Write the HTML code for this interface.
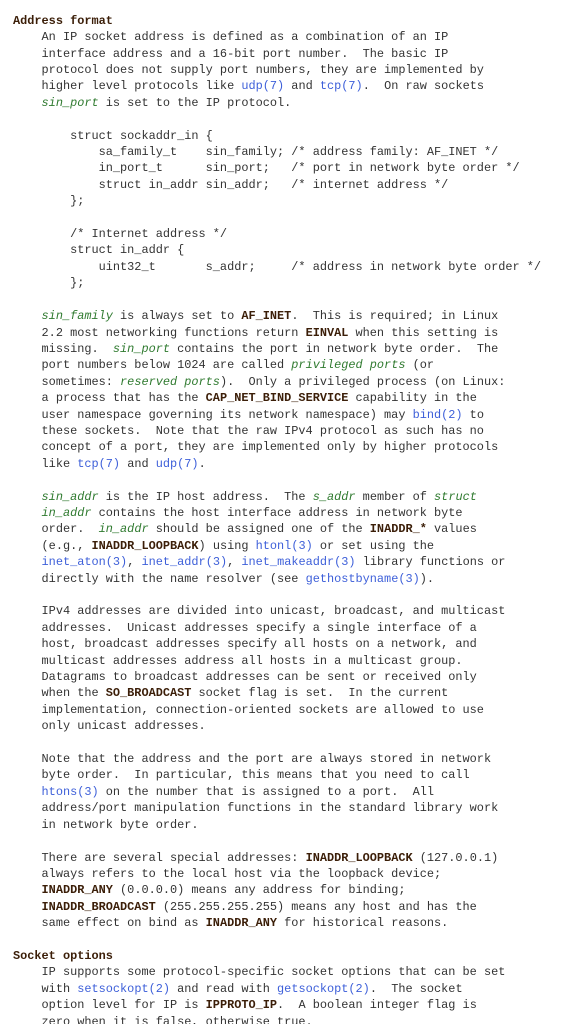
<!DOCTYPE html>
<html><head><meta charset="utf-8"><style>
html,body{margin:0;padding:0;background:#fff;width:572px;height:1024px;overflow:hidden}
pre{margin:0;padding:12.8px 0 0 13px;font-family:"Liberation Mono","Noto Sans CJK SC",monospace;font-size:11.9px;line-height:16.4px;color:#333}
.h{color:#3b1e08;font-weight:bold}
b{color:#3b1e08}
i{color:#2f7a2f}
a{color:#3d5fd9;text-decoration:none}
</style></head><body><pre><span class="h">Address format</span>
    An IP socket address is defined as a combination of an IP
    interface address and a 16-bit port number.  The basic IP
    protocol does not supply port numbers, they are implemented by
    higher level protocols like <a>udp(7)</a> and <a>tcp(7)</a>.  On raw sockets
    <i>sin_port</i> is set to the IP protocol.

        struct sockaddr_in {
            sa_family_t    sin_family; /* address family: AF_INET */
            in_port_t      sin_port;   /* port in network byte order */
            struct in_addr sin_addr;   /* internet address */
        };

        /* Internet address */
        struct in_addr {
            uint32_t       s_addr;     /* address in network byte order */
        };

    <i>sin_family</i> is always set to <b>AF_INET</b>.  This is required; in Linux
    2.2 most networking functions return <b>EINVAL</b> when this setting is
    missing.  <i>sin_port</i> contains the port in network byte order.  The
    port numbers below 1024 are called <i>privileged ports</i> (or
    sometimes: <i>reserved ports</i>).  Only a privileged process (on Linux:
    a process that has the <b>CAP_NET_BIND_SERVICE</b> capability in the
    user namespace governing its network namespace) may <a>bind(2)</a> to
    these sockets.  Note that the raw IPv4 protocol as such has no
    concept of a port, they are implemented only by higher protocols
    like <a>tcp(7)</a> and <a>udp(7)</a>.

    <i>sin_addr</i> is the IP host address.  The <i>s_addr</i> member of <i>struct</i>
    <i>in_addr</i> contains the host interface address in network byte
    order.  <i>in_addr</i> should be assigned one of the <b>INADDR_*</b> values
    (e.g., <b>INADDR_LOOPBACK</b>) using <a>htonl(3)</a> or set using the
    <a>inet_aton(3)</a>, <a>inet_addr(3)</a>, <a>inet_makeaddr(3)</a> library functions or
    directly with the name resolver (see <a>gethostbyname(3)</a>).

    IPv4 addresses are divided into unicast, broadcast, and multicast
    addresses.  Unicast addresses specify a single interface of a
    host, broadcast addresses specify all hosts on a network, and
    multicast addresses address all hosts in a multicast group.
    Datagrams to broadcast addresses can be sent or received only
    when the <b>SO_BROADCAST</b> socket flag is set.  In the current
    implementation, connection-oriented sockets are allowed to use
    only unicast addresses.

    Note that the address and the port are always stored in network
    byte order.  In particular, this means that you need to call
    <a>htons(3)</a> on the number that is assigned to a port.  All
    address/port manipulation functions in the standard library work
    in network byte order.

    There are several special addresses: <b>INADDR_LOOPBACK</b> (127.0.0.1)
    always refers to the local host via the loopback device;
    <b>INADDR_ANY</b> (0.0.0.0) means any address for binding;
    <b>INADDR_BROADCAST</b> (255.255.255.255) means any host and has the
    same effect on bind as <b>INADDR_ANY</b> for historical reasons.

<span class="h">Socket options</span>
    IP supports some protocol-specific socket options that can be set
    with <a>setsockopt(2)</a> and read with <a>getsockopt(2)</a>.  The socket
    option level for IP is <b>IPPROTO_IP</b>.  A boolean integer flag is
    zero when it is false, otherwise true.
</pre></body></html>
